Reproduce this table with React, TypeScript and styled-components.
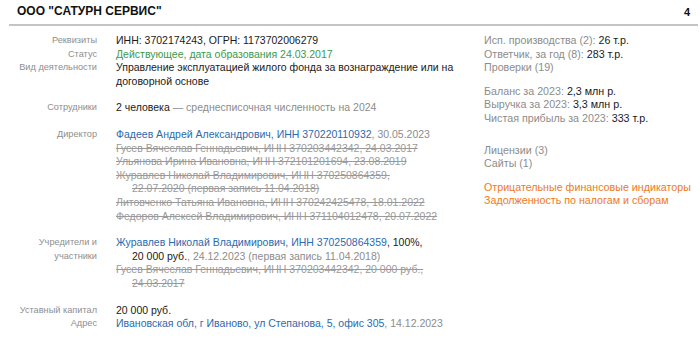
import React from 'react'
import styled, { createGlobalStyle } from 'styled-components'

const GlobalStyle = createGlobalStyle`
    body {
        margin: 0;
        background: #fff;
        font-family: "Liberation Sans", Arial, sans-serif;
        color: #1a1a1a;
    }
`

const App = () => {
    return (
        <PageStyled>
            <GlobalStyle />
            <HeaderStyled>
                <TitleStyled>ООО "САТУРН СЕРВИС"</TitleStyled>
                <PageNumStyled>4</PageNumStyled>
            </HeaderStyled>
            <BodyStyled>
                <MainStyled>
                    <GroupStyled>
                        <LabelStyled>Реквизиты</LabelStyled>
                        <ValueStyled>ИНН: 3702174243, ОГРН: 1173702006279</ValueStyled>
                        <LabelStyled>Статус</LabelStyled>
                        <ValueStyled $tone="green">Действующее, дата образования 24.03.2017</ValueStyled>
                        <LabelStyled>Вид деятельности</LabelStyled>
                        <ValueStyled>Управление эксплуатацией жилого фонда за вознаграждение или на договорной основе</ValueStyled>
                    </GroupStyled>
                    <GroupStyled>
                        <LabelStyled>Сотрудники</LabelStyled>
                        <ValueStyled>2 человека <Muted>— среднесписочная численность на 2024</Muted></ValueStyled>
                    </GroupStyled>
                    <GroupStyled>
                        <LabelStyled>Директор</LabelStyled>
                        <ValueStyled>
                            <Entry><Link>Фадеев Андрей Александрович, ИНН 370220110932</Link><Muted>, 30.05.2023</Muted></Entry>
                            <Entry $old>Гусев Вячеслав Геннадьевич, ИНН 370203442342, 24.03.2017</Entry>
                            <Entry $old>Ульянова Ирина Ивановна, ИНН 372101201694, 23.08.2019</Entry>
                            <Entry $old>Журавлев Николай Владимирович, ИНН 370250864359, <NoWrap>22.07.2020 (первая запись 11.04.2018)</NoWrap></Entry>
                            <Entry $old>Литовченко Татьяна Ивановна, ИНН 370242425478, 18.01.2022</Entry>
                            <Entry $old>Федоров Алексей Владимирович, ИНН 371104012478, 20.07.2022</Entry>
                        </ValueStyled>
                    </GroupStyled>
                    <GroupStyled>
                        <LabelStyled>Учредители и<br />участники</LabelStyled>
                        <ValueStyled>
                            <Entry><Link>Журавлев Николай Владимирович, ИНН 370250864359</Link>, 100%, <NoWrap>20 000 руб.<Muted>, 24.12.2023 (первая запись 11.04.2018)</Muted></NoWrap></Entry>
                            <Entry $old>Гусев Вячеслав Геннадьевич, ИНН 370203442342, 20 000 руб., <NoWrap>24.03.2017</NoWrap></Entry>
                        </ValueStyled>
                    </GroupStyled>
                    <GroupStyled>
                        <LabelStyled>Уставный капитал</LabelStyled>
                        <ValueStyled>20 000 руб.</ValueStyled>
                        <LabelStyled>Адрес</LabelStyled>
                        <ValueStyled><Link>Ивановская обл, г Иваново, ул Степанова, 5, офис 305</Link><Muted>, 14.12.2023</Muted></ValueStyled>
                    </GroupStyled>
                </MainStyled>
                <SideStyled>
                    <SideGroup>
                        <SideLine>Исп. производства (2): <b>26 т.р.</b></SideLine>
                        <SideLine>Ответчик, за год (8): <b>283 т.р.</b></SideLine>
                        <SideLine>Проверки (19)</SideLine>
                    </SideGroup>
                    <SideGroup>
                        <SideLine>Баланс за 2023: <b>2,3 млн р.</b></SideLine>
                        <SideLine>Выручка за 2023: <b>3,3 млн р.</b></SideLine>
                        <SideLine>Чистая прибыль за 2023: <b>333 т.р.</b></SideLine>
                    </SideGroup>
                    <SideGroup $gap={18}>
                        <SideLine>Лицензии (3)</SideLine>
                        <SideLine>Сайты (1)</SideLine>
                    </SideGroup>
                    <SideGroup>
                        <SideLine $warn>Отрицательные финансовые индикаторы</SideLine>
                        <SideLine $warn>Задолженность по налогам и сборам</SideLine>
                    </SideGroup>
                </SideStyled>
            </BodyStyled>
        </PageStyled>
    )
}

export default App

const PageStyled = styled.div`
    width: 700px;
    height: 337px;
    padding: 0 2px 0 9px;
    box-sizing: border-box;
    overflow: hidden;
`
const HeaderStyled = styled.div`
    display: flex;
    justify-content: space-between;
    align-items: center;
    padding: 4px 8px 5px 8px;
    border-bottom: 2px solid #c4c4c4;
`
const TitleStyled = styled.h1`
    margin: 0;
    font-size: 12px;
    line-height: 15px;
    font-weight: bold;
    color: #111;
`
const PageNumStyled = styled.span`
    font-size: 11px;
    font-weight: bold;
    color: #111;
`
const BodyStyled = styled.div`
    display: flex;
    padding-top: 8px;
    line-height: 13.6px;
`
const MainStyled = styled.div`
    width: 452px;
    display: flex;
    flex-direction: column;
    gap: 13px;
    font-size: 10.5px;
`
const GroupStyled = styled.div`
    display: grid;
    grid-template-columns: 88px 345px;
    column-gap: 19px;
`
const LabelStyled = styled.div`
    text-align: right;
    color: #8e8e8e;
    font-size: 9.2px;
`
const ValueStyled = styled.div<{ $tone?: string }>`
    color: ${p => (p.$tone === 'green' ? '#3b9a4c' : '#1a1a1a')};
`
const Entry = styled.div<{ $old?: boolean }>`
    padding-left: 16px;
    text-indent: -16px;
    color: ${p => (p.$old ? '#9a9a9a' : '#1a1a1a')};
    text-decoration: ${p => (p.$old ? 'line-through' : 'none')};
`
const NoWrap = styled.span`
    white-space: nowrap;
`
const Link = styled.span`
    color: #2d6aad;
`
const Muted = styled.span`
    color: #8c8c8c;
`
const SideStyled = styled.div`
    margin-left: 23px;
    display: flex;
    flex-direction: column;
    font-size: 10.7px;
`
const SideGroup = styled.div<{ $gap?: number }>`
    margin-top: ${p => (p.$gap ?? 10)}px;
    &:first-child {
        margin-top: 0;
    }
    b {
        font-weight: normal;
        color: #1a1a1a;
    }
`
const SideLine = styled.div<{ $warn?: boolean }>`
    color: ${p => (p.$warn ? '#ef7a22' : '#8c8c8c')};
`
